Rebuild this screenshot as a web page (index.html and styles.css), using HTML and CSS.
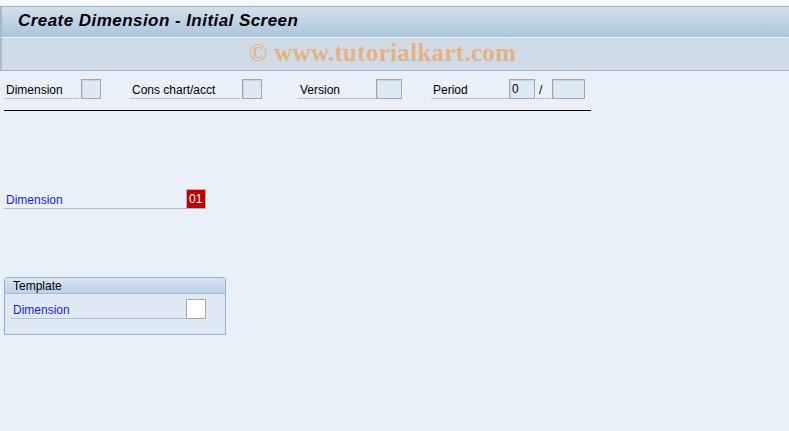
FILE: index.html
```html
<!DOCTYPE html>
<html lang="en">
<head>
  <meta charset="UTF-8">
  <meta name="viewport" content="width=device-width, initial-scale=1.0">
  <title>Create Dimension - Initial Screen</title>
  <link rel="stylesheet" href="styles.css">
</head>
<body>
  <div class="top-strip"></div>
  <header class="titlebar">
    <h1>Create Dimension - Initial Screen</h1>
  </header>
  <div class="toolbar">
    <span class="watermark">&copy; www.tutorialkart.com</span>
  </div>

  <main class="screen">
    <!-- Header fields -->
    <div class="header-fields">
      <div class="field f-dim">
        <span class="label w-dim">Dimension</span>
        <span class="box"></span>
      </div>
      <div class="field f-chart">
        <span class="label w-chart">Cons chart/acct</span>
        <span class="box"></span>
      </div>
      <div class="field f-version">
        <span class="label w-version">Version</span>
        <span class="box wide"></span>
      </div>
      <div class="field f-period">
        <span class="label w-period">Period</span>
        <span class="box wide">0</span>
        <span class="label slash">/</span>
        <span class="box wider"></span>
      </div>
    </div>
    <div class="rule"></div>

    <!-- Main field -->
    <div class="field f-main">
      <span class="label link w-main">Dimension</span>
      <span class="box required">01</span>
    </div>

    <!-- Template group -->
    <section class="group">
      <div class="group-title">Template</div>
      <div class="group-body">
        <div class="field">
          <span class="label link w-tpl">Dimension</span>
          <span class="box white"></span>
        </div>
      </div>
    </section>
  </main>
</body>
</html>
```

FILE: styles.css
```css
body {
  margin: 0;
  font-family: "Liberation Sans", Arial, sans-serif;
  font-size: 12px;
  background-color: #eaf0f7;
  color: #000;
  height: 431px;
  overflow: hidden;
}

.top-strip {
  height: 6px;
  background: #f7f9fc;
  border-bottom: 1px solid #9eadc2;
}

.titlebar {
  height: 30px;
  background: linear-gradient(#d2e0ed, #adc4dc);
  border-left: 2px solid #a9b8c8;
  border-bottom: 1px solid #eaf0f6;
  display: flex;
  align-items: center;
}

.titlebar h1 {
  margin: -2px 0 0 16px;
  font-size: 17px;
  font-weight: bold;
  font-style: italic;
  letter-spacing: 0.45px;
}

.toolbar {
  height: 32px;
  background: #cfdce8;
  border-left: 2px solid #a9b8c8;
  border-bottom: 1px solid #a3b4c7;
  display: flex;
  align-items: center;
  justify-content: center;
}

.watermark {
  font-family: "Liberation Serif", "Times New Roman", serif;
  font-weight: bold;
  font-size: 25px;
  letter-spacing: 0.3px;
  color: #e6b283;
  margin-left: -26px;
  margin-top: -2px;
}

.screen {
  padding: 8px 0 0 4px;
}

.header-fields {
  display: flex;
  align-items: flex-end;
}

.field {
  display: flex;
  align-items: flex-end;
}

.label {
  height: 19px;
  line-height: 22px;
  padding-left: 2px;
  border-bottom: 1px solid #b7c0ca;
  box-sizing: content-box;
  white-space: nowrap;
}

.link {
  color: #1a1ae6;
}

.w-dim { width: 73px; margin-right: 2px; }
.w-chart { width: 108px; margin-right: 2px; }
.w-version { width: 76px; }
.w-period { width: 76px; }
.w-main { width: 180px; }
.w-tpl { width: 173px; }

.f-chart { margin-left: 29px; }
.f-version { margin-left: 36px; }
.f-period { margin-left: 29px; }

.slash {
  width: 12px;
  margin: 0 1px;
  padding-left: 3px;
}

.box {
  width: 18px;
  height: 18px;
  border: 1px solid #a6a6a6;
  background: #dde9f4;
  box-shadow: inset 1px 1px 0 #c9d4df;
  line-height: 19px;
  padding-left: 0;
  font-size: 12px;
  text-indent: 2px;
}

.box.wide { width: 24px; }
.box.wider { width: 31px; }

.box.white {
  background: #fff;
  box-shadow: none;
}

.box.required {
  background: #c00000;
  color: #fff;
  box-shadow: none;
  border-color: #b0b0b0;
}

.rule {
  width: 587px;
  height: 0;
  border-top: 1px solid #000;
  margin-top: 11px;
}

.f-main {
  margin-top: 78px;
}

.group {
  margin-top: 68px;
  width: 220px;
  border: 1px solid #8fb1d3;
  border-radius: 3px 3px 0 0;
  background: #dfe9f4;
}

.group-title {
  height: 15px;
  line-height: 16px;
  padding-left: 8px;
  background: linear-gradient(#d8e5f1, #bdd2e7);
  border-bottom: 1px solid #9fbbd8;
}

.group-body {
  padding: 5px 0 15px 6px;
}
```
